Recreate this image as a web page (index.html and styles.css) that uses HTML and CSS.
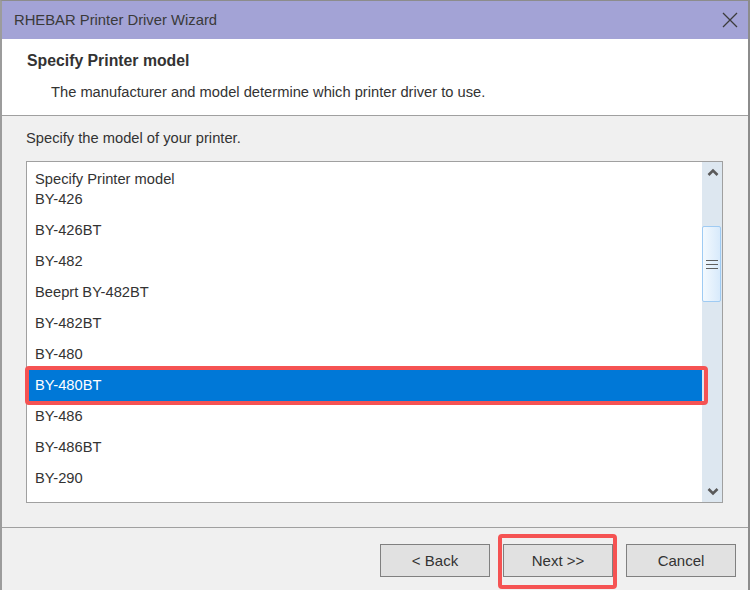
FILE: index.html
```html
<!DOCTYPE html>
<html>
<head>
<meta charset="utf-8">
<link rel="stylesheet" href="styles.css">
</head>
<body>
<div class="window">
  <div class="titlebar">
    <span class="title">RHEBAR Printer Driver Wizard</span>
    <svg class="close" width="16" height="16" viewBox="0 0 16 16"><path d="M1 1 L15 15 M15 1 L1 15" stroke="#3c3c3c" stroke-width="1.3" fill="none"/></svg>
  </div>
  <div class="header">
    <div class="h-title">Specify Printer model</div>
    <div class="h-desc">The manufacturer and model determine which printer driver to use.</div>
  </div>
  <div class="body">
    <div class="prompt">Specify the model of your printer.</div>
    <div class="listbox">
      <div class="list">
        <div class="list-head">Specify Printer model</div>
        <div class="item">BY-426</div>
        <div class="item">BY-426BT</div>
        <div class="item">BY-482</div>
        <div class="item">Beeprt BY-482BT</div>
        <div class="item">BY-482BT</div>
        <div class="item">BY-480</div>
        <div class="item selected">BY-480BT</div>
        <div class="item">BY-486</div>
        <div class="item">BY-486BT</div>
        <div class="item">BY-290</div>
      </div>
      <div class="scrollbar">
        <svg class="arrow" width="12" height="8" viewBox="0 0 12 8"><path d="M1.5 7 L6 2.5 L10.5 7" stroke="#5a5a5a" stroke-width="2.6" fill="none"/></svg>
        <div class="track">
          <div class="thumb">
            <span class="grip"></span><span class="grip"></span><span class="grip"></span>
          </div>
        </div>
        <svg class="arrow" width="12" height="8" viewBox="0 0 12 8"><path d="M1.5 1 L6 5.5 L10.5 1" stroke="#5a5a5a" stroke-width="2.6" fill="none"/></svg>
      </div>
    </div>
  </div>
  <div class="footer">
    <button class="btn">&lt; Back</button>
    <button class="btn">Next &gt;&gt;</button>
    <button class="btn">Cancel</button>
  </div>
  <div class="mark mark-item"></div>
  <div class="mark mark-next"></div>
</div>
</body>
</html>
```
FILE: styles.css
```css
html, body {
  margin: 0;
  padding: 0;
  background: #f0f0f0;
}
.window {
  position: relative;
  width: 750px;
  height: 590px;
  box-sizing: border-box;
  border-top: 1px solid #8c8c8c;
  border-left: 2px solid #9c9c9c;
  border-right: 2px solid #8c8c8c;
  font-family: "Liberation Sans", Arial, sans-serif;
  font-size: 14.7px;
  color: #333;
  background: #f0f0f0;
  display: flex;
  flex-direction: column;
}
.titlebar {
  height: 38px;
  background: #a3a3d6;
  display: flex;
  align-items: center;
  justify-content: space-between;
  padding: 0 10px 0 12px;
  flex-shrink: 0;
}
.title {
  color: #3a3a3a;
  font-size: 14.8px;
}
.close {
  display: block;
}
.header {
  height: 64px;
  background: #fff;
  border-bottom: 1px solid #a0a0a0;
  padding: 12px 0 0 25px;
  box-sizing: content-box;
  flex-shrink: 0;
}
.h-title {
  font-weight: bold;
  font-size: 15.8px;
  line-height: 20px;
  color: #333;
}
.h-desc {
  margin-top: 11px;
  margin-left: 24px;
  line-height: 20px;
}
.body {
  height: 412px;
  border-bottom: 1px solid #a0a0a0;
  padding: 12px 0 0 24px;
  box-sizing: border-box;
  flex-shrink: 0;
}
.prompt {
  line-height: 20px;
}
.listbox {
  margin-top: 13px;
  width: 697px;
  height: 342px;
  box-sizing: border-box;
  border: 1px solid #a0a0a0;
  background: #fff;
  display: flex;
}
.list {
  flex: 1;
  overflow: hidden;
}
.list-head {
  line-height: 20px;
  padding: 7px 0 0 8px;
  margin-bottom: -5px;
}
.item {
  height: 31px;
  line-height: 31px;
  padding-left: 8px;
}
.item.selected {
  background: #0078d7;
  color: #fff;
}
.scrollbar {
  width: 20px;
  background: #dde7f0;
  display: flex;
  flex-direction: column;
  align-items: center;
}
.arrow {
  display: block;
  margin: 6px 0 6px 2px;
  flex-shrink: 0;
}
.track {
  flex: 1;
  width: 100%;
  padding-top: 44px;
  box-sizing: border-box;
}
.thumb {
  width: 19px;
  height: 76px;
  box-sizing: border-box;
  border: 1px solid #9fcbf3;
  border-radius: 2px;
  background: linear-gradient(to right, #f3f9fe, #d8eafb);
  display: flex;
  flex-direction: column;
  align-items: center;
  justify-content: center;
  gap: 3px;
}
.grip {
  display: block;
  width: 12px;
  height: 1px;
  background: #5f5f5f;
}
.footer {
  flex: 1;
  display: flex;
  justify-content: flex-end;
  align-items: flex-start;
  gap: 13px;
  padding: 16px 12px 0 0;
}
.btn {
  width: 110px;
  height: 33px;
  box-sizing: border-box;
  background: #e1e1e1;
  border: 1px solid #808080;
  border-radius: 0;
  font-family: "Liberation Sans", Arial, sans-serif;
  font-size: 15px;
  color: #333;
  padding: 0;
}
.mark {
  position: absolute;
  box-sizing: border-box;
  border: 4px solid #f55353;
  border-radius: 4px;
}
.mark-item {
  left: 23px;
  top: 365px;
  width: 683px;
  height: 39px;
}
.mark-next {
  left: 496px;
  top: 533px;
  width: 119px;
  height: 55px;
}
```
